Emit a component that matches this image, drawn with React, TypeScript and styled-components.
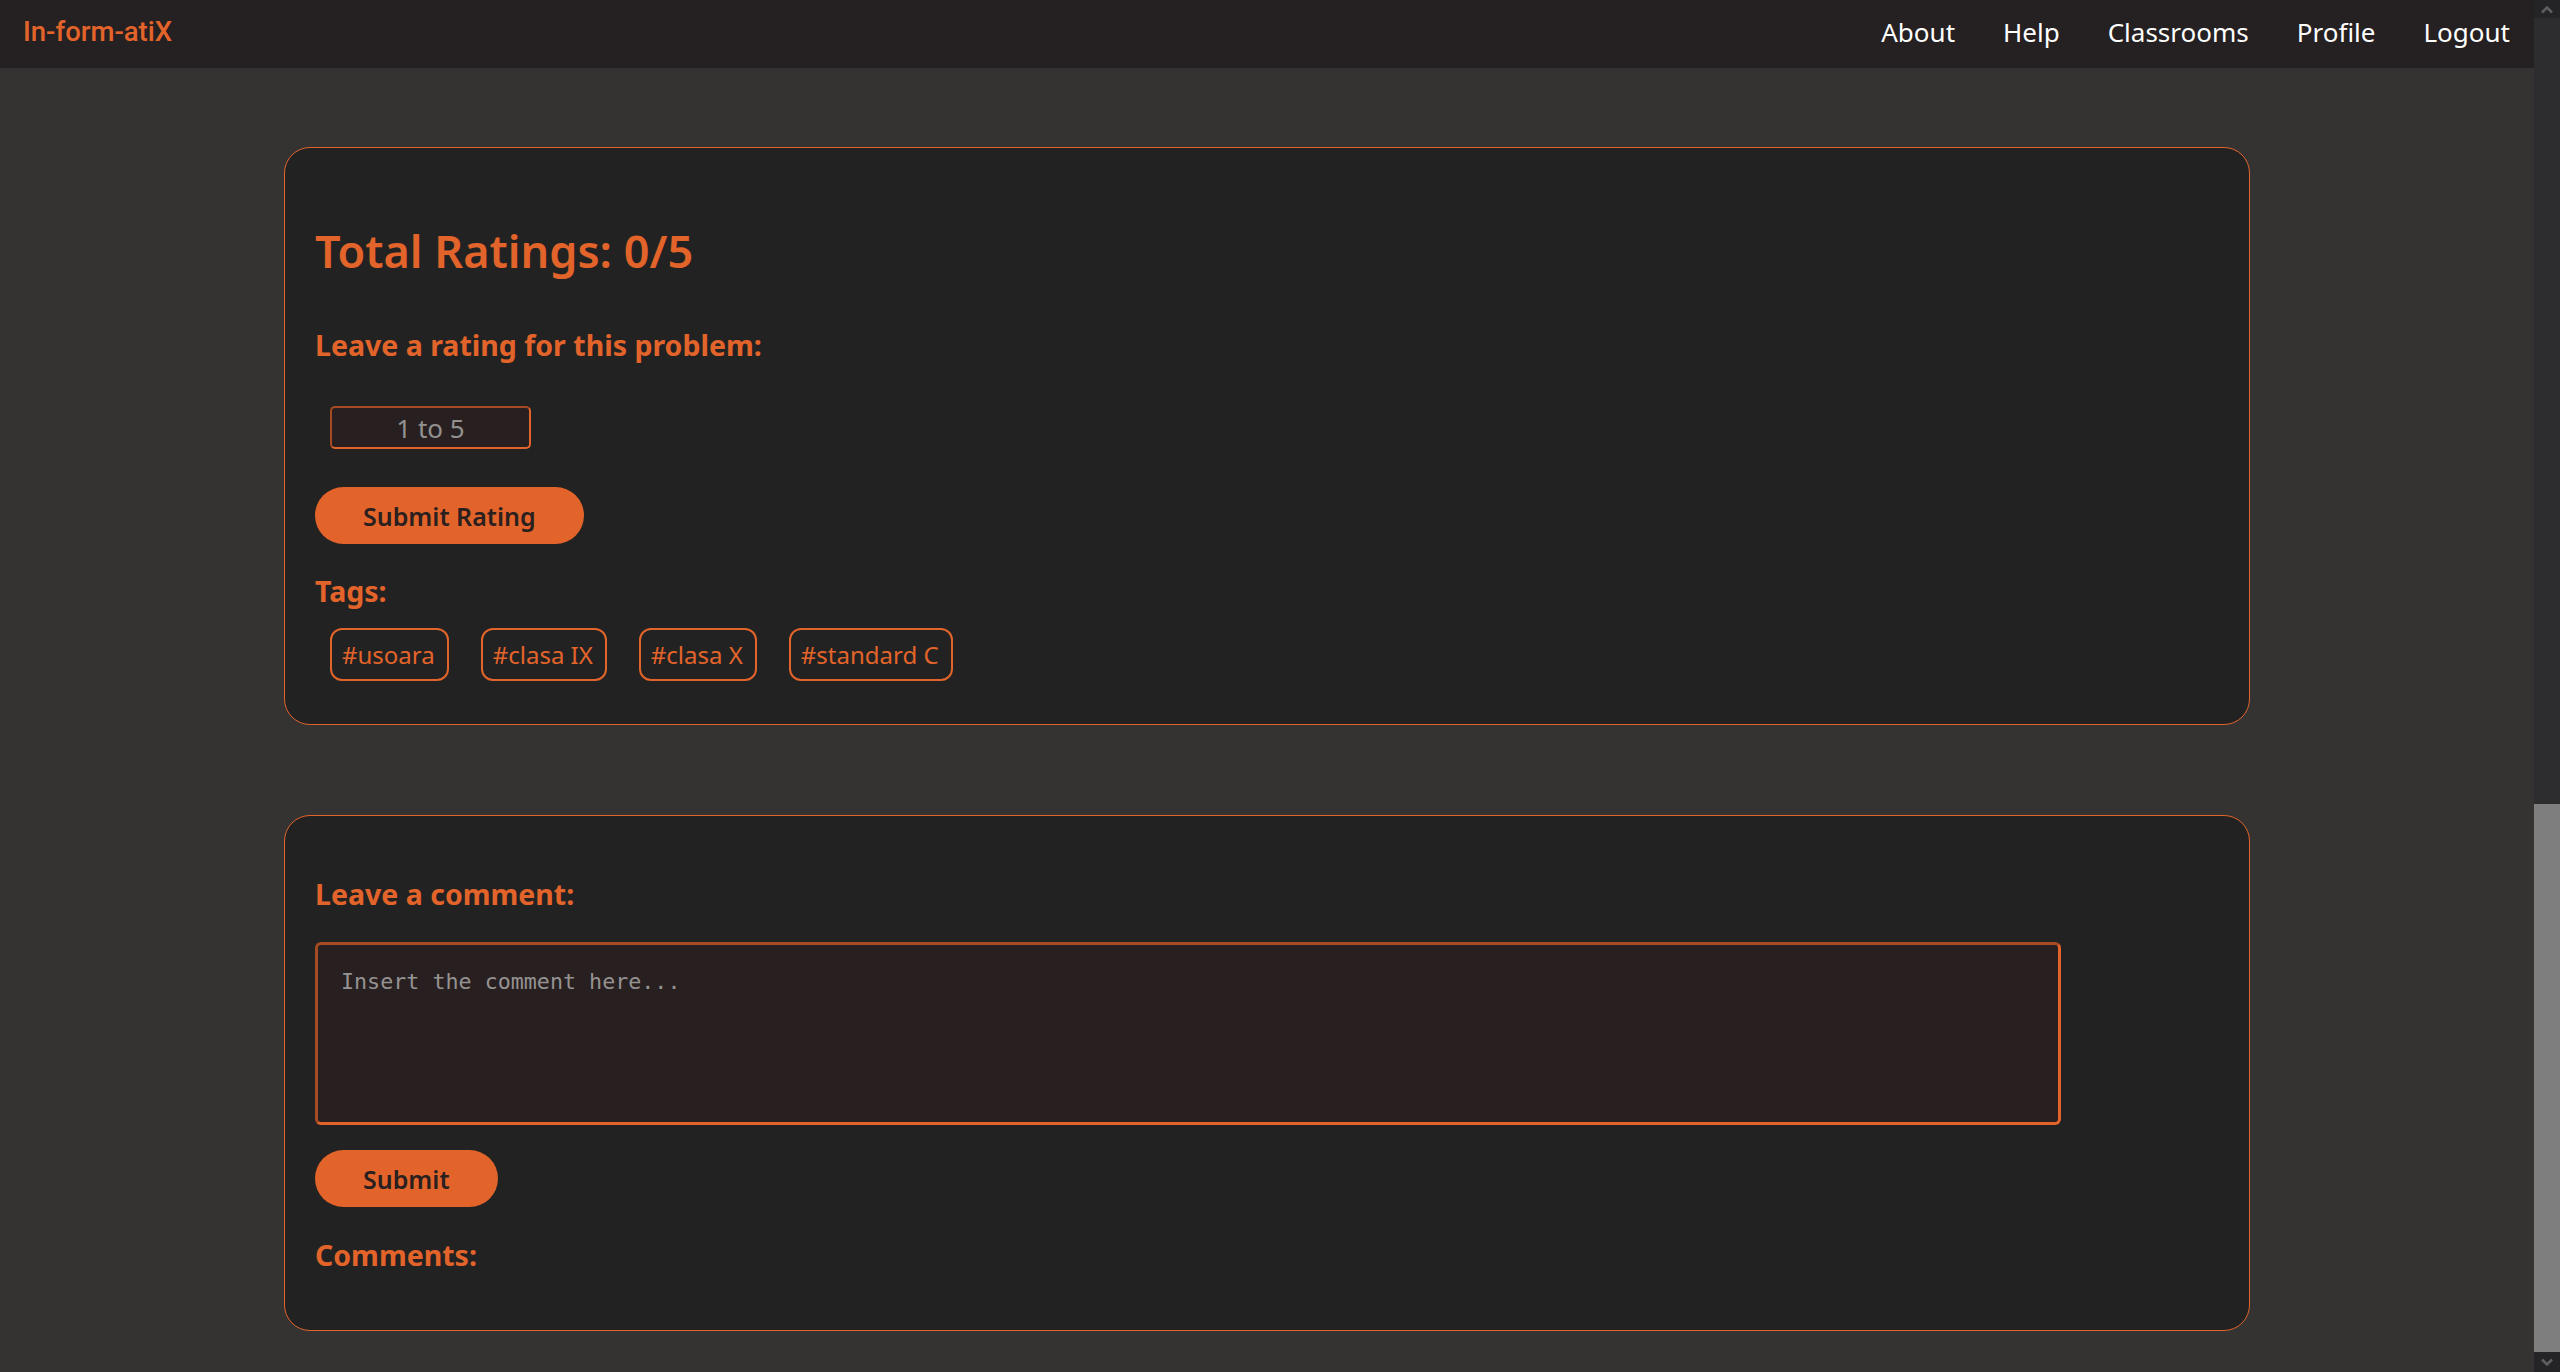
import React from "react";
import styled, { createGlobalStyle } from "styled-components";

const ORANGE = "#e2642a";
const ORANGE_DARK = "#a54a22";

const GlobalStyle = createGlobalStyle`
  html, body {
    margin: 0;
    padding: 0;
    height: 100%;
    overflow: hidden;
  }
  body {
    background: #353331;
    font-family: "Noto Sans", "Open Sans", sans-serif;
  }
  * { box-sizing: border-box; }
`;

const Shell = styled.div`
  display: grid;
  grid-template-columns: 1fr 26px;
  height: 100vh;
`;

const Page = styled.div`
  display: flex;
  flex-direction: column;
  overflow: hidden;
  background: #353331;
`;

const NavBar = styled.nav`
  height: 68px;
  flex-shrink: 0;
  background: #252021;
  display: flex;
  align-items: flex-start;
  justify-content: space-between;
  padding: 14px 24px 0 23px;
`;

const Logo = styled.a`
  font-family: Roboto, "Noto Sans", sans-serif;
  font-weight: 500;
  font-size: 27.5px;
  color: ${ORANGE};
  text-decoration: none;
  margin-top: 1px;
`;

const NavLinks = styled.div`
  display: flex;
  gap: 48px;
`;

const NavLink = styled.a`
  color: #ffffff;
  font-size: 26px;
  text-decoration: none;
  line-height: normal;
`;

const Main = styled.main`
  display: flex;
  flex-direction: column;
  align-items: center;
  gap: 90px;
  padding-top: 79px;
`;

const Card = styled.section<{ $padTop: number; $padBottom: number }>`
  width: 1966px;
  flex-shrink: 0;
  background: #222222;
  border: 1px solid ${ORANGE};
  border-radius: 26px;
  padding: ${(p) => p.$padTop}px 30px ${(p) => p.$padBottom}px 30px;
  display: flex;
  flex-direction: column;
  align-items: flex-start;
`;

const Title = styled.h2`
  margin: 0 0 51px;
  font-size: 45px;
  line-height: 53px;
  font-weight: 600;
  color: ${ORANGE};
`;

const SubHeading = styled.h3<{ $gap: number }>`
  margin: 0 0 ${(p) => p.$gap}px;
  font-size: 28.5px;
  line-height: 34px;
  font-weight: 700;
  color: ${ORANGE};
`;

const RatingInput = styled.input`
  width: 201px;
  height: 43px;
  margin: 0 0 38px 15px;
  padding: 0 8px;
  background: #282020;
  border-style: solid;
  border-width: 2px;
  border-color: ${ORANGE_DARK} ${ORANGE} ${ORANGE} ${ORANGE_DARK};
  border-radius: 5px;
  font-family: "Noto Sans", sans-serif;
  font-size: 26px;
  color: #dddddd;
  text-align: center;
  outline: none;
  &::placeholder {
    color: #939090;
  }
`;

const PillButton = styled.button<{ $gap: number }>`
  height: 57px;
  padding: 0 48px;
  margin: 0 0 ${(p) => p.$gap}px;
  border: none;
  border-radius: 29px;
  background: ${ORANGE};
  color: #2a201f;
  font-family: "Noto Sans", sans-serif;
  font-weight: 600;
  font-size: 25px;
  cursor: pointer;
`;

const TagRow = styled.div`
  display: flex;
  gap: 32px;
  padding-left: 15px;
`;

const Tag = styled.span`
  display: flex;
  align-items: center;
  height: 53px;
  padding: 0 12px 0 10px;
  border: 2.5px solid ${ORANGE};
  border-radius: 12px;
  font-size: 24px;
  color: ${ORANGE};
  white-space: nowrap;
`;

const CommentBox = styled.textarea`
  width: 1746px;
  height: 183px;
  margin: 0 0 25px;
  padding: 24px 23px;
  background: #282020;
  border-style: solid;
  border-width: 3px;
  border-color: ${ORANGE_DARK} ${ORANGE} ${ORANGE} ${ORANGE_DARK};
  border-radius: 6px;
  font-family: "DejaVu Sans Mono", "Liberation Mono", monospace;
  font-size: 21.7px;
  color: #dddddd;
  resize: none;
  outline: none;
  &::placeholder {
    color: #959292;
  }
`;

const ScrollBar = styled.div`
  display: flex;
  flex-direction: column;
  background: #2d2c2e;
  height: 100vh;
`;

const ScrollArrow = styled.div<{ $h: number }>`
  height: ${(p) => p.$h}px;
  flex-shrink: 0;
  background: #242326;
  display: flex;
  align-items: center;
  justify-content: center;
`;

const ScrollTrack = styled.div`
  flex: 1;
  display: flex;
  flex-direction: column;
  justify-content: flex-end;
`;

const ScrollThumb = styled.div`
  height: 548px;
  background: #7f7e7f;
`;

const Chevron = ({ up }: { up?: boolean }) => (
  <svg width="14" height="9" viewBox="0 0 14 9">
    <polyline
      points={up ? "2,7.5 7,2.5 12,7.5" : "2,1.5 7,6.5 12,1.5"}
      fill="none"
      stroke="#5e5e60"
      strokeWidth="2.6"
    />
  </svg>
);

const tags = ["#usoara", "#clasa IX", "#clasa X", "#standard C"];
const links = ["About", "Help", "Classrooms", "Profile", "Logout"];

export default function App() {
  return (
    <>
      <GlobalStyle />
      <Shell>
        <Page>
          <NavBar>
            <Logo href="#">In-form-atiX</Logo>
            <NavLinks>
              {links.map((l) => (
                <NavLink key={l} href="#">
                  {l}
                </NavLink>
              ))}
            </NavLinks>
          </NavBar>
          <Main>
            <Card $padTop={76} $padBottom={43}>
              <Title>Total Ratings: 0/5</Title>
              <SubHeading $gap={44}>Leave a rating for this problem:</SubHeading>
              <RatingInput placeholder="1 to 5" />
              <PillButton $gap={30}>Submit Rating</PillButton>
              <SubHeading $gap={20}>Tags:</SubHeading>
              <TagRow>
                {tags.map((t) => (
                  <Tag key={t}>{t}</Tag>
                ))}
              </TagRow>
            </Card>
            <Card $padTop={61} $padBottom={58}>
              <SubHeading $gap={31}>Leave a comment:</SubHeading>
              <CommentBox placeholder="Insert the comment here..." />
              <PillButton $gap={31}>Submit</PillButton>
              <SubHeading $gap={0}>Comments:</SubHeading>
            </Card>
          </Main>
        </Page>
        <ScrollBar>
          <ScrollArrow $h={18}>
            <Chevron up />
          </ScrollArrow>
          <ScrollTrack>
            <ScrollThumb />
          </ScrollTrack>
          <ScrollArrow $h={20}>
            <Chevron />
          </ScrollArrow>
        </ScrollBar>
      </Shell>
    </>
  );
}
